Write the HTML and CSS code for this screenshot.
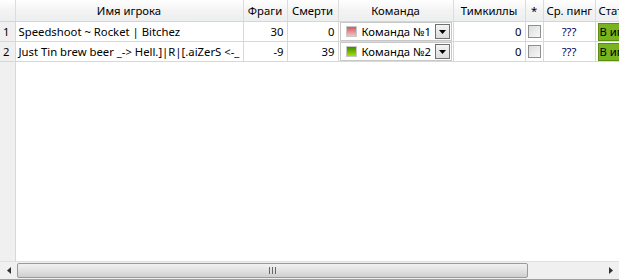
FILE: index.html
```html
<!DOCTYPE html>
<html lang="ru">
<head>
  <meta charset="UTF-8" />
  <title>Игроки</title>
  <link rel="stylesheet" href="styles.css">
</head>
<body>
  <div class="view">
    <div class="grid">
      <table class="players">
        <colgroup>
          <col class="c-num"><col class="c-name"><col class="c-frags"><col class="c-deaths">
          <col class="c-team"><col class="c-tk"><col class="c-star"><col class="c-ping"><col class="c-status">
        </colgroup>
        <thead>
          <tr>
            <th></th>
            <th>Имя игрока</th>
            <th>Фраги</th>
            <th>Смерти</th>
            <th>Команда</th>
            <th>Тимкиллы</th>
            <th>*</th>
            <th>Ср. пинг</th>
            <th class="left">Статус</th>
          </tr>
        </thead>
        <tbody>
          <tr>
            <td class="num">1</td>
            <td class="name">Speedshoot ~ Rocket | Bitchez</td>
            <td class="right">30</td>
            <td class="right">0</td>
            <td class="team">
              <div class="combo">
                <span class="swatch red"></span>
                <span class="combo-text">Команда №1</span>
                <span class="drop"><svg width="7" height="4" viewBox="0 0 7 4"><path d="M0 0h7L3.5 4z" fill="#000"/></svg></span>
              </div>
            </td>
            <td class="right">0</td>
            <td class="star"><span class="check"></span></td>
            <td class="ping">???</td>
            <td class="status"><span class="ingame">В игре</span></td>
          </tr>
          <tr>
            <td class="num">2</td>
            <td class="name">Just Tin brew beer _-&gt; Hell.]|R|[.aiZerS &lt;-_</td>
            <td class="right">-9</td>
            <td class="right">39</td>
            <td class="team">
              <div class="combo">
                <span class="swatch green"></span>
                <span class="combo-text">Команда №2</span>
                <span class="drop"><svg width="7" height="4" viewBox="0 0 7 4"><path d="M0 0h7L3.5 4z" fill="#000"/></svg></span>
              </div>
            </td>
            <td class="right">0</td>
            <td class="star"><span class="check"></span></td>
            <td class="ping">???</td>
            <td class="status"><span class="ingame">В игре</span></td>
          </tr>
        </tbody>
      </table>
    </div>
    <div class="hscroll">
      <div class="arrow"><svg width="4" height="7" viewBox="0 0 4 7"><path d="M4 0v7L0 3.5z" fill="#333"/></svg></div>
      <div class="track">
        <div class="thumb"><span class="grip"></span></div>
      </div>
      <div class="arrow"><svg width="4" height="7" viewBox="0 0 4 7"><path d="M0 0v7L4 3.5z" fill="#333"/></svg></div>
    </div>
  </div>
</body>
</html>
```

FILE: styles.css
```css
body { margin: 0; font-family: "Noto Sans", "Open Sans", sans-serif; font-size: 11.3px; color: #000; background: #fff; }
.view { width: 619px; height: 280px; display: flex; flex-direction: column; overflow: hidden; border-bottom: 1px solid #a0a0a0; box-sizing: border-box; }
.grid { flex: 1; overflow: hidden; background: linear-gradient(to right, #f0f0f0 15px, #d8d8d8 15px, #d8d8d8 16px, #fff 16px); }

.players { border-collapse: collapse; table-layout: fixed; width: 640px; }
.c-num { width: 15px; }
.c-name { width: 228px; }
.c-frags { width: 44px; }
.c-deaths { width: 51px; }
.c-team { width: 115px; }
.c-tk { width: 72px; }
.c-star { width: 18px; }
.c-ping { width: 52px; }
.c-status { width: 45px; }

.players th { height: 21px; padding: 0 3px; font-weight: normal; white-space: nowrap; overflow: hidden;
  background: linear-gradient(#fff, #f3f3f3 50%, #eceeef); border-right: 1px solid #dcdcdc; border-bottom: 1px solid #d5d5d5; }
.players th.left { text-align: left; }
.players td { height: 19px; padding: 0 3px; white-space: nowrap; overflow: hidden; border-right: 1px solid #d8d8d8; border-bottom: 1px solid #d8d8d8; background: #fff; }
.players td.num { background: #f0f0f0; text-align: left; padding-left: 3px; }
.players td.right { text-align: right; }
.players td.ping { text-align: center; color: #000060; }
.players td.team { padding: 0 1px; }
.players td.star { padding: 0 2px; }
.players td.status { padding: 0 2px; }

.combo { display: flex; align-items: center; height: 17px; border: 1px solid #c8c8c8; background: #fff; }
.swatch { width: 11px; height: 11px; margin: 0 5px 0 5px; border: 1px solid #c8c8c8; box-sizing: border-box; }
.swatch.red { background: linear-gradient(#d45a64, #f2c0c4); }
.swatch.green { background: linear-gradient(#3c8c00, #a8e000); }
.combo-text { flex: 1; }
.drop { width: 15px; height: 15px; margin-right: 1px; display: flex; align-items: center; justify-content: center;
  border: 1px solid #707070; box-sizing: border-box; background: linear-gradient(#f4f4f4, #dcdcdc); }

.check { display: block; width: 13px; height: 13px; border: 1px solid #8e8f8f; box-sizing: border-box; background: linear-gradient(135deg, #dcdcdc, #f8f8f8); }

.ingame { display: block; padding: 0 1px; height: 16px; line-height: 15px; background: #78b41e; border: 1px solid #5a9012; }

.hscroll { height: 17px; display: flex; background: #f0f0f0; border-top: 1px solid #e0e0e0; }
.arrow { width: 17px; display: flex; align-items: center; justify-content: center; }
.track { flex: 1; padding: 1px 0; }
.thumb { width: 511px; height: 15px; box-sizing: border-box; border: 1px solid #9a9a9a; border-radius: 2px;
  background: linear-gradient(#f2f2f2, #e2e2e2 50%, #cfcfcf); display: flex; align-items: center; justify-content: center; }
.grip { width: 7px; height: 7px; background: repeating-linear-gradient(to right, #666 0 1px, transparent 1px 3px); }
```
